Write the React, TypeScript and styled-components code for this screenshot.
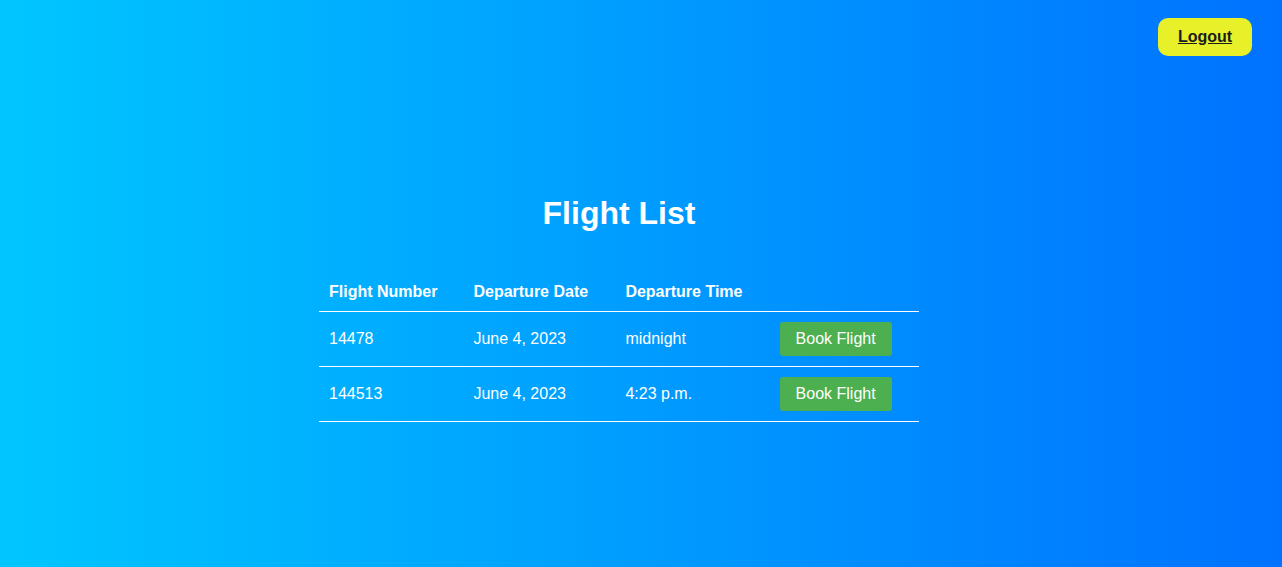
import React from "react";
import styled, { createGlobalStyle } from "styled-components";

const GlobalStyle = createGlobalStyle`
  html, body { margin: 0; padding: 0; }
  body {
    font-family: "Liberation Sans", Arial, sans-serif;
    background: linear-gradient(to right, #00c6ff, #0072ff);
    min-height: 567px;
    color: #fff;
  }
`;

const Page = styled.div`
  min-height: 567px;
  display: flex;
  flex-direction: column;
`;

const TopBar = styled.header`
  display: flex;
  justify-content: flex-end;
  padding: 18px 30px 0 30px;
`;

const LogoutButton = styled.button`
  width: 94px;
  height: 38px;
  border: none;
  border-radius: 10px;
  background: #e8f02a;
  color: #1c1c1c;
  font-family: "Liberation Sans", Arial, sans-serif;
  font-size: 16px;
  font-weight: bold;
  text-decoration: underline;
  cursor: pointer;
`;

const Main = styled.main`
  display: flex;
  flex-direction: column;
  align-items: center;
  padding: 139px 44px 0 0;
`;

const Title = styled.h2`
  margin: 0 0 41px 0;
  font-size: 32px;
  line-height: 37px;
  font-weight: bold;
  color: #fff;
`;

const Table = styled.table`
  width: 600px;
  border-collapse: collapse;
  font-size: 16px;
  color: #fff;
`;

const HeadCell = styled.th<{ $w: number }>`
  width: ${(p) => p.$w}px;
  text-align: left;
  padding: 10px;
  line-height: 18px;
  font-weight: bold;
  border-bottom: 1px solid #fff;
`;

const Cell = styled.td`
  padding: 10px;
  line-height: 18px;
  border-bottom: 1px solid #fff;
  vertical-align: middle;
`;

const BookButton = styled.button`
  height: 34px;
  padding: 0 16px;
  border: none;
  border-radius: 3px;
  background: #4caf50;
  color: #fff;
  font-family: "Liberation Sans", Arial, sans-serif;
  font-size: 16px;
  cursor: pointer;
`;

const flights = [
  { number: "14478", date: "June 4, 2023", time: "midnight" },
  { number: "144513", date: "June 4, 2023", time: "4:23 p.m." },
];

export default function App() {
  return (
    <>
      <GlobalStyle />
      <Page>
        <TopBar>
          <LogoutButton>Logout</LogoutButton>
        </TopBar>
        <Main>
          <Title>Flight List</Title>
          <Table>
            <thead>
              <tr>
                <HeadCell $w={146}>Flight Number</HeadCell>
                <HeadCell $w={151}>Departure Date</HeadCell>
                <HeadCell $w={154}>Departure Time</HeadCell>
                <HeadCell $w={149}></HeadCell>
              </tr>
            </thead>
            <tbody>
              {flights.map((f) => (
                <tr key={f.number}>
                  <Cell>{f.number}</Cell>
                  <Cell>{f.date}</Cell>
                  <Cell>{f.time}</Cell>
                  <Cell>
                    <BookButton>Book Flight</BookButton>
                  </Cell>
                </tr>
              ))}
            </tbody>
          </Table>
        </Main>
      </Page>
    </>
  );
}
